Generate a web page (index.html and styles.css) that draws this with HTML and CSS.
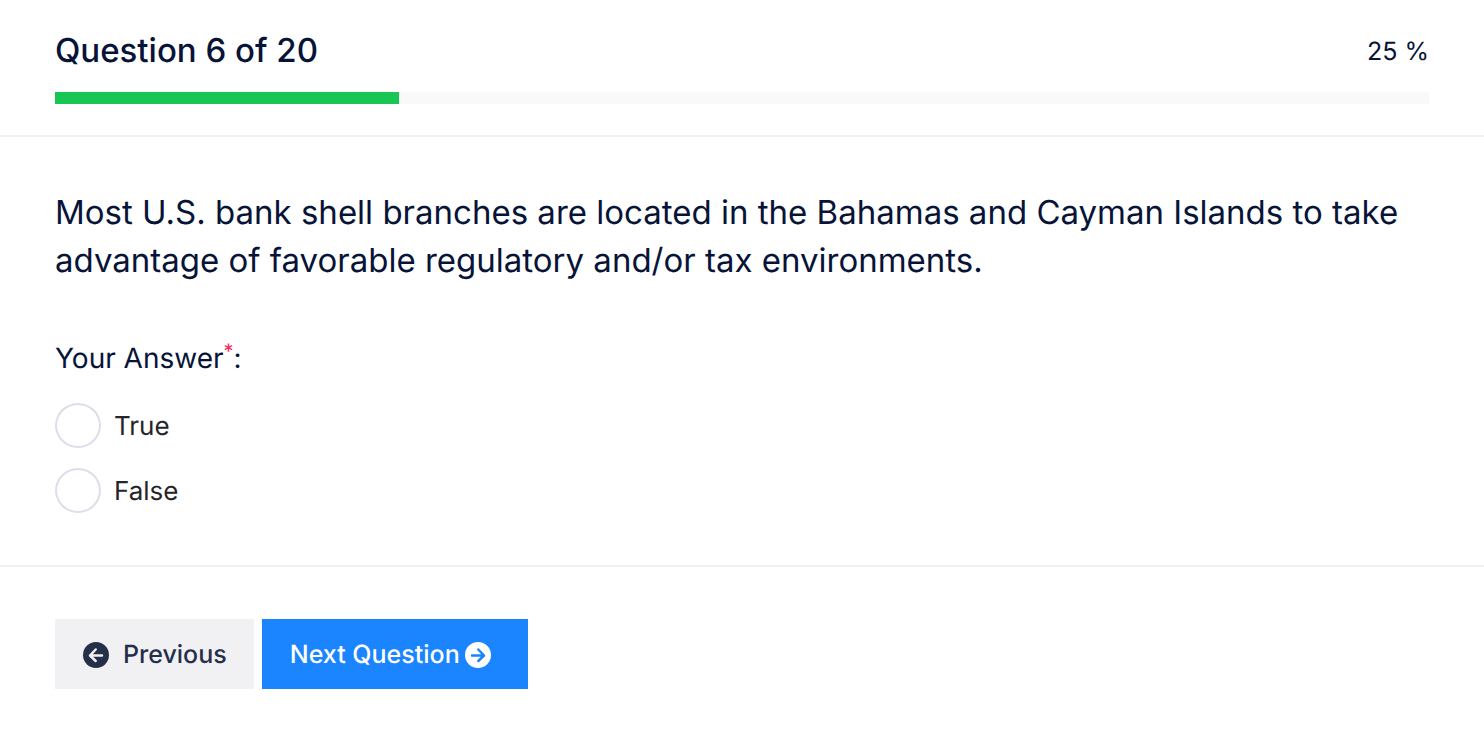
FILE: index.html
```html
<!DOCTYPE html>
<html lang="en">

<head>
    <meta charset="UTF-8">
    <meta name="viewport" content="width=device-width, initial-scale=1.0">
    <title>Quiz</title>
    <link rel="stylesheet" href="styles.css">
</head>

<body>
    <form class="quiz">
        <header class="quiz-header">
            <div class="quiz-status">
                <h1 class="quiz-title">Question 6 of 20</h1>
                <span class="quiz-percent">25 %</span>
            </div>
            <div class="progress" role="progressbar" aria-valuenow="25" aria-valuemin="0" aria-valuemax="100">
                <div class="progress-bar" style="width: 25%"></div>
            </div>
        </header>

        <main class="quiz-body">
            <p class="question">Most U.S. bank shell branches are located in the Bahamas and Cayman Islands to take advantage of favorable regulatory and/or tax environments.</p>

            <fieldset class="answers">
                <legend class="answers-label">Your Answer<sup class="required">*</sup>:</legend>
                <div class="answer">
                    <input type="radio" id="answerTrue" name="answer" value="true">
                    <label for="answerTrue">True</label>
                </div>
                <div class="answer">
                    <input type="radio" id="answerFalse" name="answer" value="false">
                    <label for="answerFalse">False</label>
                </div>
            </fieldset>
        </main>

        <footer class="quiz-footer">
            <button type="button" class="btn btn-previous">
                <svg class="icon" viewBox="0 0 26 26" aria-hidden="true">
                    <circle cx="13" cy="13" r="13" fill="#252f4a" />
                    <path d="M19 13.500H7.500M12.700 7.500L7 13.500l5.700 5.500" fill="none" stroke="#f1f1f4" stroke-width="2.500" stroke-linecap="round" stroke-linejoin="round" />
                </svg>
                Previous
            </button>
            <button type="submit" class="btn btn-next">
                Next Question
                <svg class="icon" viewBox="0 0 26 26" aria-hidden="true">
                    <circle cx="13" cy="13" r="13" fill="#fff" />
                    <path d="M7 13.500h11.500M13.300 7.500L19 13.500l-5.700 5.500" fill="none" stroke="#1b84ff" stroke-width="2.500" stroke-linecap="round" stroke-linejoin="round" />
                </svg>
            </button>
        </footer>
    </form>
</body>

</html>
```
FILE: styles.css
```css
body {
    margin: 0;
    background-color: #fff;
    color: #071437;
    font-family: Inter, "Liberation Sans", sans-serif;
    text-rendering: geometricPrecision;
}

.quiz-header {
    padding: 26px 55px 31px;
    border-bottom: 2px solid #f1f1f2;
}

.quiz-status {
    display: flex;
    align-items: center;
    justify-content: space-between;
    margin-bottom: 18px;
}

.quiz-title {
    margin: 0;
    font-size: 33px;
    font-weight: 500;
    line-height: 48px;
}

.quiz-percent {
    padding-top: 3px;
    font-size: 25px;
    line-height: 32px;
}

.progress {
    height: 12px;
    background-color: #f9f9f9;
}

.progress-bar {
    height: 100%;
    background-color: #17c653;
}

.quiz-body {
    padding: 51px 55px 52px;
    border-bottom: 2px solid #f1f1f2;
}

.question {
    margin: 0 0 53px;
    font-size: 33px;
    line-height: 48px;
}

.answers {
    margin: 0;
    padding: 0;
    border: 0;
}

.answers-label {
    margin-bottom: 24px;
    padding: 0;
    font-size: 28px;
    line-height: 42px;
}

.required {
    color: #f8285a;
    font-size: 20px;
    line-height: 0;
}

.answer {
    display: flex;
    align-items: center;
    gap: 13px;
    color: #252528;
    font-size: 26px;
}

.answer + .answer {
    margin-top: 20px;
}

.answer label {
    padding-top: 2px;
}

.answer input {
    appearance: none;
    box-sizing: border-box;
    width: 46px;
    height: 45px;
    margin: 0;
    border: 2px solid #dbdfe9;
    border-radius: 50%;
}

.answer input:checked {
    border: 14px solid #1b84ff;
}

/* Buttons */
.quiz-footer {
    display: flex;
    gap: 8px;
    padding: 52px 55px;
}

.btn {
    display: flex;
    align-items: center;
    height: 70px;
    padding: 2px 27px 0 28px;
    border: 0;
    font-family: inherit;
    font-size: 25px;
    font-weight: 500;
    text-rendering: inherit;
    cursor: pointer;
}

.btn-previous {
    gap: 14px;
    background-color: #f1f1f4;
    color: #252f4a;
}

.btn-next {
    gap: 5px;
    padding-right: 37px;
    background-color: #1b84ff;
    color: #fff;
}

.icon {
    width: 26px;
    height: 26px;
}
```
